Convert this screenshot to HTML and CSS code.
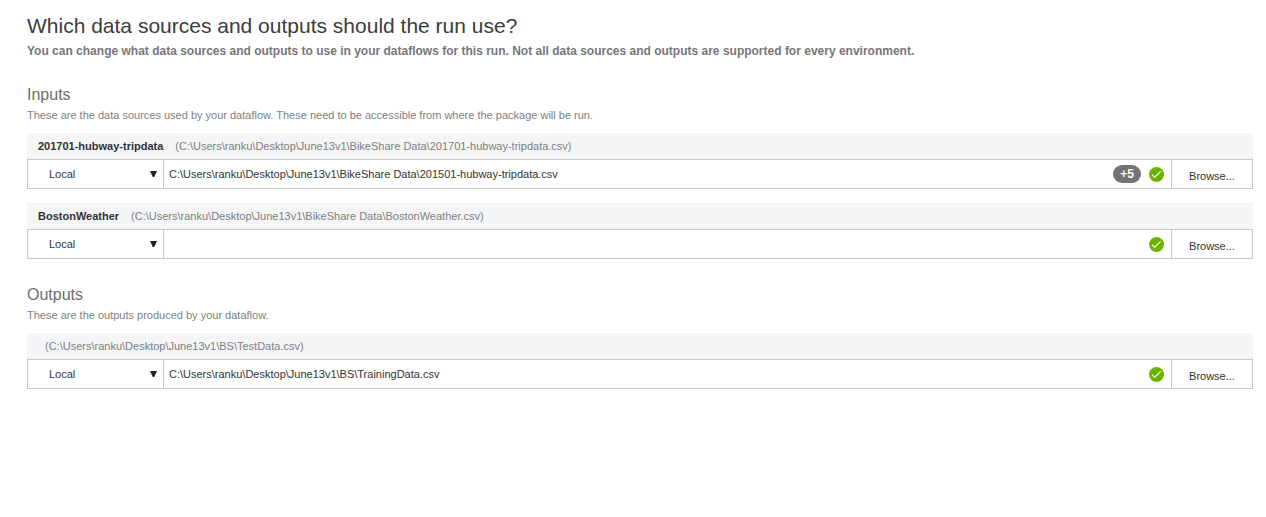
FILE: index.html
```html
<!DOCTYPE html>
<html lang="en">
<head>
<meta charset="utf-8">
<title>Run data sources and outputs</title>
<link rel="stylesheet" href="styles.css">
</head>
<body>
<main class="page">
  <header class="intro">
    <h1 class="title">Which data sources and outputs should the run use?</h1>
    <p class="subtitle">You can change what data sources and outputs to use in your dataflows for this run. Not all data sources and outputs are supported for every environment.</p>
  </header>

  <section class="section">
    <h2 class="section-title">Inputs</h2>
    <p class="section-note">These are the data sources used by your dataflow. These need to be accessible from where the package will be run.</p>
    <div class="sources">
      <div class="source">
        <div class="source-head"><span class="source-name">201701-hubway-tripdata</span><span class="source-path">(C:\Users\ranku\Desktop\June13v1\BikeShare Data\201701-hubway-tripdata.csv)</span></div>
        <div class="source-row">
          <div class="location">
            <select class="location-select" aria-label="Location of 201701-hubway-tripdata"><option>Local</option></select>
            <svg class="caret" viewBox="0 0 7 6" aria-hidden="true"><path d="M0 0h7L4.2 6H2.8z"/></svg>
          </div>
          <input class="path" type="text" aria-label="Path of 201701-hubway-tripdata" value="C:\Users\ranku\Desktop\June13v1\BikeShare Data\201501-hubway-tripdata.csv">
          <span class="more">+5</span>
          <svg class="status" viewBox="0 0 15 15" role="img" aria-label="Valid"><circle class="disc" cx="7.5" cy="7.5" r="7.5"/><path class="tick" d="M3 7.6l2.7 2.6 6-5.8"/></svg>
          <button class="browse" type="button">Browse...</button>
        </div>
      </div>
      <div class="source">
        <div class="source-head"><span class="source-name">BostonWeather</span><span class="source-path">(C:\Users\ranku\Desktop\June13v1\BikeShare Data\BostonWeather.csv)</span></div>
        <div class="source-row">
          <div class="location">
            <select class="location-select" aria-label="Location of BostonWeather"><option>Local</option></select>
            <svg class="caret" viewBox="0 0 7 6" aria-hidden="true"><path d="M0 0h7L4.2 6H2.8z"/></svg>
          </div>
          <input class="path" type="text" aria-label="Path of BostonWeather" value="">
          <svg class="status" viewBox="0 0 15 15" role="img" aria-label="Valid"><circle class="disc" cx="7.5" cy="7.5" r="7.5"/><path class="tick" d="M3 7.6l2.7 2.6 6-5.8"/></svg>
          <button class="browse" type="button">Browse...</button>
        </div>
      </div>
    </div>
  </section>

  <section class="section">
    <h2 class="section-title">Outputs</h2>
    <p class="section-note">These are the outputs produced by your dataflow.</p>
    <div class="sources">
      <div class="source">
        <div class="source-head source-head-unnamed"><span class="source-path">(C:\Users\ranku\Desktop\June13v1\BS\TestData.csv)</span></div>
        <div class="source-row">
          <div class="location">
            <select class="location-select" aria-label="Location of output"><option>Local</option></select>
            <svg class="caret" viewBox="0 0 7 6" aria-hidden="true"><path d="M0 0h7L4.2 6H2.8z"/></svg>
          </div>
          <input class="path" type="text" aria-label="Path of output" value="C:\Users\ranku\Desktop\June13v1\BS\TrainingData.csv">
          <svg class="status" viewBox="0 0 15 15" role="img" aria-label="Valid"><circle class="disc" cx="7.5" cy="7.5" r="7.5"/><path class="tick" d="M3 7.6l2.7 2.6 6-5.8"/></svg>
          <button class="browse" type="button">Browse...</button>
        </div>
      </div>
    </div>
  </section>
</main>
</body>
</html>
```
FILE: styles.css
```css
* {
  box-sizing: border-box;
}

body {
  margin: 0;
  background: #fff;
  color: #333;
  font-family: "Liberation Sans", Arial, sans-serif;
  font-size: 11px;
}

.page {
  padding: 14px 13px 24px 27px;
}

.title,
.subtitle,
.section-title,
.section-note {
  margin: 0;
}

.title {
  color: #3c3c3c;
  font-size: 21px;
  font-weight: 400;
  line-height: 24px;
}

.subtitle {
  padding-top: 5px;
  color: #777;
  font-size: 12px;
  font-weight: 700;
  line-height: 16px;
}

.section {
  padding-top: 26px;
}

.section-title {
  color: #6e6e6e;
  font-size: 16px;
  font-weight: 400;
  line-height: 20px;
}

.section-note {
  padding-top: 2px;
  color: #808080;
  font-size: 11px;
  font-weight: 400;
  line-height: 16px;
}

.sources {
  display: flex;
  flex-direction: column;
  gap: 14px;
  padding-top: 10px;
}

.source-head {
  display: flex;
  gap: 12px;
  padding: 0 11px;
  background: #f4f5f7;
  line-height: 26px;
}

.source-head-unnamed {
  padding-left: 18px;
}

.source-name {
  font-weight: 700;
}

.source-path {
  color: #808080;
}

.source-row {
  display: flex;
  align-items: center;
  height: 30px;
  border: 1px solid #c8c8c8;
}

.location {
  position: relative;
  flex: none;
  align-self: stretch;
  width: 136px;
  border-right: 1px solid #c8c8c8;
}

.location-select {
  width: 100%;
  height: 100%;
  padding: 0 20px 0 21px;
  border: 0;
  background: transparent;
  color: #333;
  font: inherit;
  appearance: none;
}

.caret {
  position: absolute;
  top: 11px;
  right: 6px;
  width: 7px;
  height: 6px;
  fill: #222;
}

.path {
  flex: 1;
  min-width: 0;
  height: 100%;
  padding: 0 5px;
  border: 0;
  background: transparent;
  color: #333;
  font: inherit;
}

.more {
  flex: none;
  margin-right: 8px;
  padding: 0 7px;
  border-radius: 9px;
  background: #737373;
  color: #fff;
  font-size: 12px;
  font-weight: 700;
  line-height: 18px;
}

.status {
  flex: none;
  width: 15px;
  height: 15px;
  margin-right: 7px;
}

.disc {
  fill: #6ab400;
}

.tick {
  fill: none;
  stroke: #fff;
  stroke-width: 1.1;
}

.browse {
  flex: none;
  align-self: stretch;
  width: 81px;
  padding: 3px 0 0;
  border: 0;
  border-left: 1px solid #c8c8c8;
  background: #fff;
  color: #333;
  font: inherit;
}
```
